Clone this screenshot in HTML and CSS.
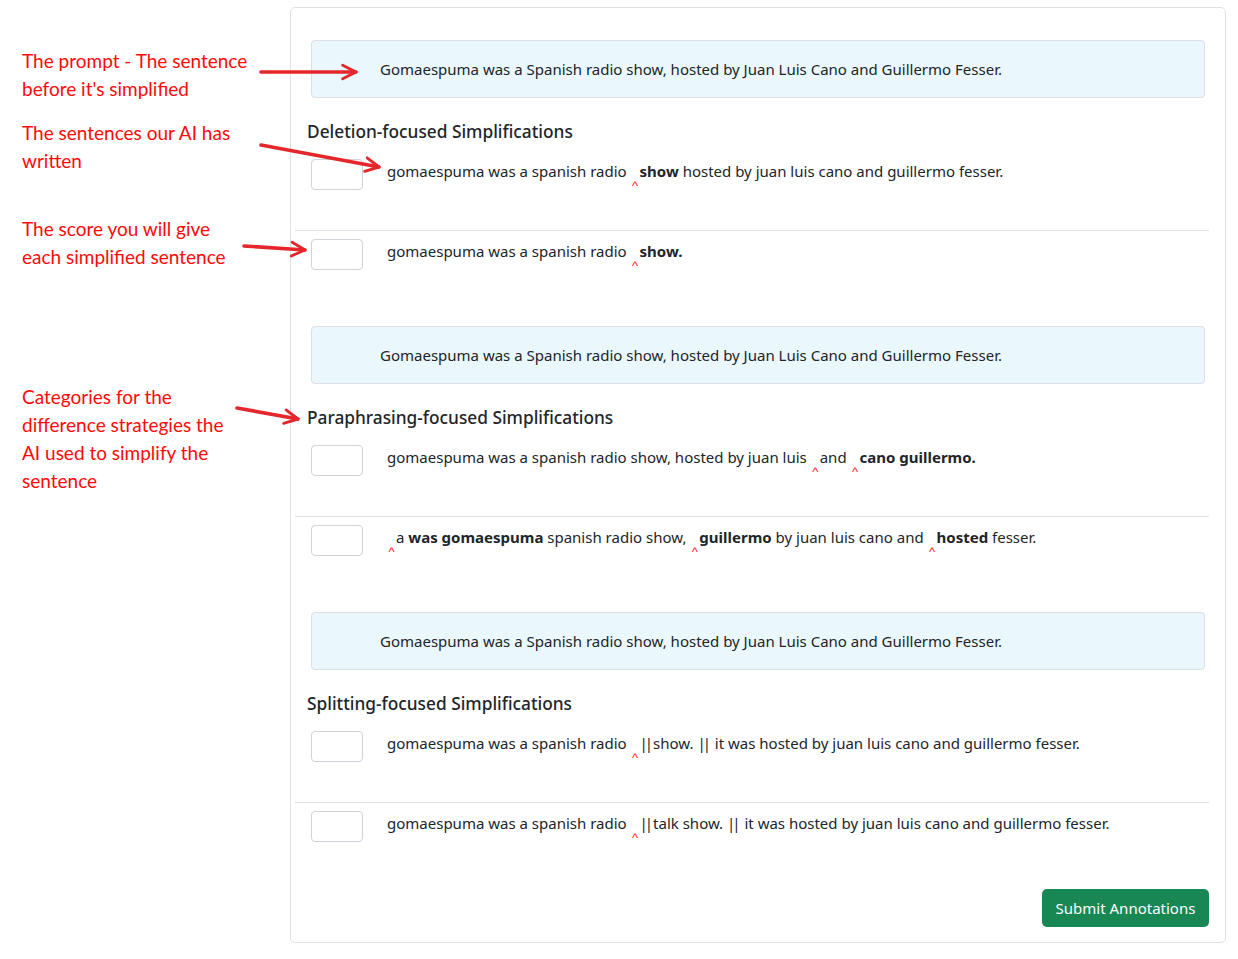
FILE: index.html
```html
<!DOCTYPE html>
<html lang="en">
<head>
<meta charset="utf-8">
<title>Simplification annotation</title>
<link rel="stylesheet" href="styles.css">
</head>
<body>
<div class="page">
  <aside class="notes">
    <p class="note note-prompt">The prompt - The sentence<br>before it's simplified</p>
    <p class="note note-sentences">The sentences our AI has<br>written</p>
    <p class="note note-score">The score you will give<br>each simplified sentence</p>
    <p class="note note-categories">Categories for the<br>difference strategies the<br>AI used to simplify the<br>sentence</p>
  </aside>

  <main class="card">
    <section class="group">
      <div class="prompt">Gomaespuma was a Spanish radio show, hosted by Juan Luis Cano and Guillermo Fesser.</div>
      <h5 class="group-title">Deletion-focused Simplifications</h5>
      <div class="row">
        <input class="score" type="text">
        <p class="simp">gomaespuma was a spanish radio <span class="ins">^</span><b>show</b> hosted by juan luis cano and guillermo fesser.</p>
      </div>
      <div class="row">
        <input class="score" type="text">
        <p class="simp">gomaespuma was a spanish radio <span class="ins">^</span><b>show.</b></p>
      </div>
    </section>

    <section class="group">
      <div class="prompt">Gomaespuma was a Spanish radio show, hosted by Juan Luis Cano and Guillermo Fesser.</div>
      <h5 class="group-title">Paraphrasing-focused Simplifications</h5>
      <div class="row">
        <input class="score" type="text">
        <p class="simp">gomaespuma was a spanish radio show, hosted by juan luis <span class="ins">^</span>and <span class="ins">^</span><b>cano guillermo.</b></p>
      </div>
      <div class="row">
        <input class="score" type="text">
        <p class="simp"><span class="ins">^</span>a <b>was gomaespuma</b> spanish radio show, <span class="ins">^</span><b>guillermo</b> by juan luis cano and <span class="ins">^</span><b>hosted</b> fesser.</p>
      </div>
    </section>

    <section class="group">
      <div class="prompt">Gomaespuma was a Spanish radio show, hosted by Juan Luis Cano and Guillermo Fesser.</div>
      <h5 class="group-title">Splitting-focused Simplifications</h5>
      <div class="row">
        <input class="score" type="text">
        <p class="simp">gomaespuma was a spanish radio <span class="ins">^</span><span class="bars">||</span>show. <span class="bars">||</span> it was hosted by juan luis cano and guillermo fesser.</p>
      </div>
      <div class="row">
        <input class="score" type="text">
        <p class="simp">gomaespuma was a spanish radio <span class="ins">^</span><span class="bars">||</span>talk show. <span class="bars">||</span> it was hosted by juan luis cano and guillermo fesser.</p>
      </div>
    </section>

    <div class="actions">
      <button class="submit" type="button">Submit Annotations</button>
    </div>
  </main>

  <svg class="arrows" width="1238" height="959" viewBox="0 0 1238 959" aria-hidden="true">
    <defs>
      <marker id="ah" viewBox="0 0 10 10" refX="8.6" refY="5" markerWidth="5" markerHeight="5" orient="auto">
        <path d="M1.2,1.2 L8.6,5 L1.2,8.8" fill="none" stroke="#e5262b" stroke-width="1.6" stroke-linecap="round" stroke-linejoin="round"/>
      </marker>
    </defs>
    <g fill="none" stroke="#e5262b" stroke-width="3.6" stroke-linecap="round">
      <line x1="261" y1="72" x2="356" y2="72" marker-end="url(#ah)"/>
      <line x1="261" y1="145" x2="379" y2="167" marker-end="url(#ah)"/>
      <line x1="244" y1="246" x2="305" y2="250" marker-end="url(#ah)"/>
      <line x1="237" y1="408" x2="298" y2="419" marker-end="url(#ah)"/>
    </g>
  </svg>
</div>
</body>
</html>
```

FILE: styles.css
```css
* {
  box-sizing: border-box;
}

html, body {
  margin: 0;
  padding: 0;
  background: #ffffff;
}

body {
  font-family: "Noto Sans", "Open Sans", sans-serif;
  color: #212529;
}

.page {
  position: relative;
  display: flex;
  align-items: flex-start;
  width: 1238px;
  height: 959px;
}

/* ---------- left annotations ---------- */
.notes {
  width: 290px;
  flex: 0 0 290px;
  padding: 47px 0 0 22px;
}

.note {
  margin: 0;
  font-family: "Lato", "Noto Sans", sans-serif;
  font-size: 19px;
  line-height: 28px;
  color: #ff0a0a;
  white-space: nowrap;
}

.note-sentences { margin-top: 16px; }
.note-score { margin-top: 40px; }
.note-categories { margin-top: 112px; }

.arrows {
  position: absolute;
  left: 0;
  top: 0;
  pointer-events: none;
}

/* ---------- card ---------- */
.card {
  width: 936px;
  height: 936px;
  margin-top: 7px;
  border: 1px solid #dee2e6;
  border-radius: 5px;
  padding: 32px 16px 15px 4px;
  display: flex;
  flex-direction: column;
}

.group + .group {
  margin-top: 16px;
}

.prompt {
  margin: 0 4px 0 16px;
  height: 58px;
  padding: 0 0 0 68px;
  display: flex;
  align-items: center;
  background: #eaf7fc;
  border: 1px solid #dcdfe3;
  border-radius: 4px;
  font-size: 15px;
}

.group-title {
  margin: 23px 0 8px;
  padding-left: 12px;
  height: 22px;
  line-height: 22px;
  font-size: 17.3px;
  font-weight: 500;
}

.row {
  display: flex;
  align-items: flex-start;
  gap: 24px;
  padding: 8px 0 40px 16px;
}

.row + .row {
  border-top: 1px solid #dee2e6;
}

.score {
  width: 52px;
  height: 31px;
  margin: 0;
  border: 1px solid #ced4da;
  border-radius: 4px;
  background: #fff;
  flex: 0 0 52px;
}

.simp {
  margin: 0;
  padding-top: 2px;
  font-size: 15px;
  line-height: 20px;
  white-space: nowrap;
}

.simp b {
  font-weight: 700;
}

.ins {
  display: inline-block;
  position: relative;
  top: 13px;
  width: 9px;
  font-family: "Liberation Sans", Arial, sans-serif;
  font-size: 13px;
  line-height: 1;
  color: #ff1a2a;
  text-align: center;
}

.bars {
  letter-spacing: -3px;
  margin-right: 3px;
}

/* ---------- actions ---------- */
.actions {
  margin-top: auto;
  display: flex;
  justify-content: flex-end;
}

.submit {
  width: 167px;
  height: 38px;
  border: 0;
  border-radius: 5px;
  background: #198754;
  color: #ffffff;
  font-family: "Noto Sans", "Open Sans", sans-serif;
  font-size: 15px;
  padding: 0;
}
```
